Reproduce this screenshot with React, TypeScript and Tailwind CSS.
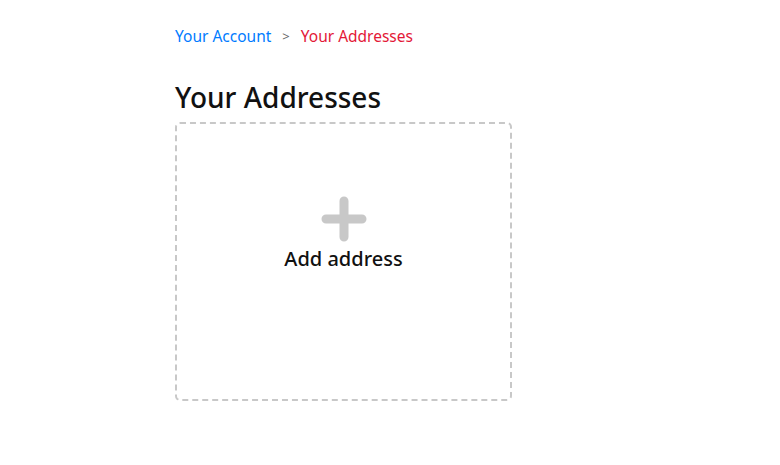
const App = () => {
  return (
    <div className="min-h-screen bg-white" style={{ fontFamily: '"Noto Sans", "Open Sans", sans-serif' }}>
      <div className="mx-auto w-[430px] pt-[24px]">
        {/* Breadcrumb */}
        <nav className="flex items-center text-[15.5px] leading-[24px]">
          <a className="text-[#007bff]">Your Account</a>
          <span className="mx-[11px] text-[13px] text-[#666]">&gt;</span>
          <span className="text-[#e31837]">Your Addresses</span>
        </nav>

        {/* Heading */}
        <h1 className="mt-[30px] text-[28px] leading-[38px] font-medium text-[#111]">Your Addresses</h1>

        {/* Add address card */}
        <div className="mt-[6px] w-[337px] h-[279px] rounded-[5px] border-2 border-dashed border-[#c8c8c8] flex flex-col items-center pt-[72px]">
          <svg width="46" height="46" viewBox="0 0 46 46" fill="none">
            <path d="M23 5V41M5 23H41" stroke="#c8c8c8" strokeWidth="9" strokeLinecap="round" />
          </svg>
          <span className="mt-[3px] text-[20px] leading-[28px] font-medium text-[#111]">Add address</span>
        </div>
      </div>
    </div>
  );
};

export default App;
